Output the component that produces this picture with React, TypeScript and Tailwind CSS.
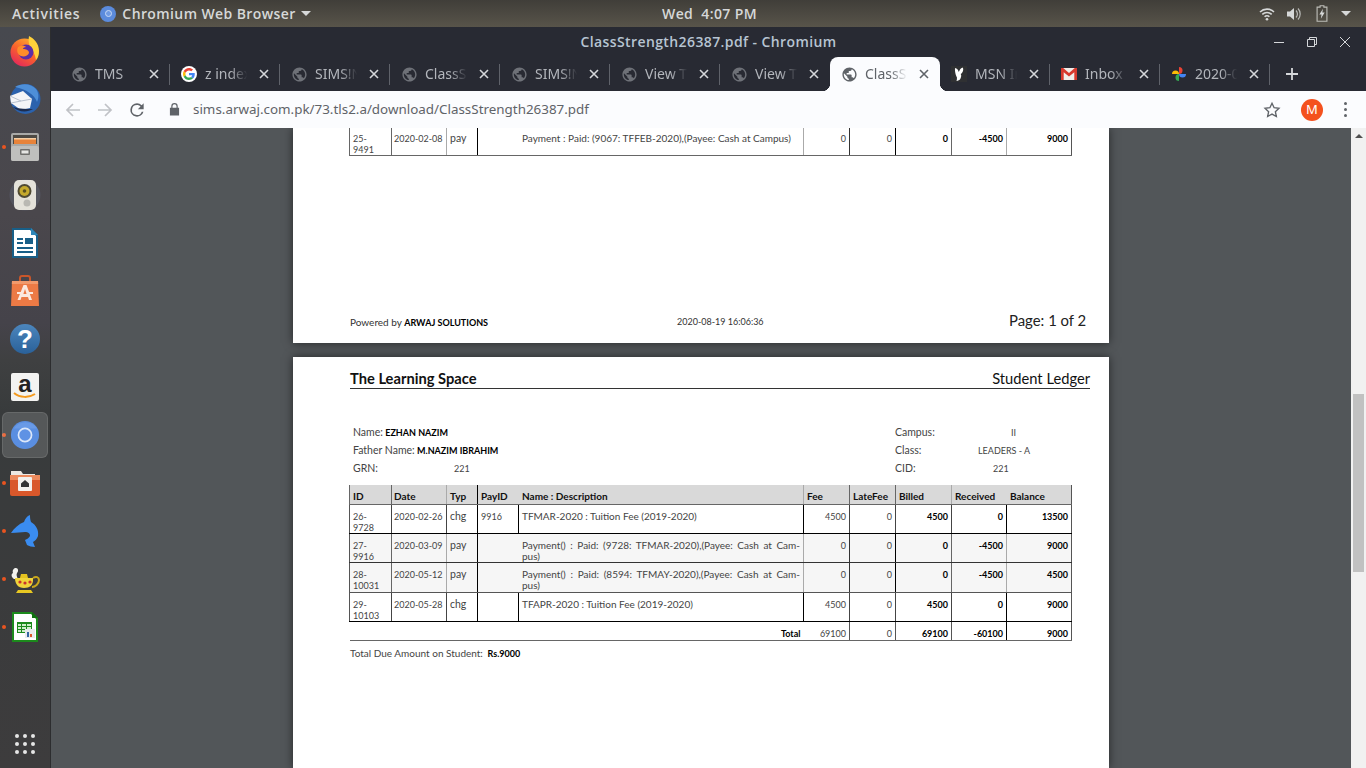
import { ReactNode } from 'react'

const globePath =
  'M12 2C6.48 2 2 6.48 2 12s4.48 10 10 10 10-4.48 10-10S17.52 2 12 2zm-1 17.93c-3.95-.49-7-3.85-7-7.93 0-.62.08-1.21.21-1.79L9 15v1c0 1.1.9 2 2 2v1.93zm6.9-2.54c-.26-.81-1-1.39-1.9-1.39h-1v-3c0-.55-.45-1-1-1H8v-2h2c.55 0 1-.45 1-1V7h2c1.1 0 2-.9 2-2v-.41c2.93 1.19 5 4.06 5 7.41 0 2.08-.8 3.97-2.1 5.39z'

function Globe({ active }: { active?: boolean }) {
  return (
    <svg viewBox="0 0 24 24" className="h-[17px] w-[17px]" fill={active ? '#5f6368' : '#6e7178'}>
      <path d={globePath} />
    </svg>
  )
}

function GoogleIcon() {
  return (
    <span className="flex h-4 w-4 items-center justify-center rounded-full bg-white">
      <svg viewBox="0 0 48 48" className="h-3 w-3">
        <path fill="#EA4335" d="M24 9.5c3.54 0 6.71 1.22 9.21 3.6l6.85-6.85C35.9 2.38 30.47 0 24 0 14.62 0 6.51 5.38 2.56 13.22l7.98 6.19C12.43 13.72 17.74 9.5 24 9.5z" />
        <path fill="#4285F4" d="M46.98 24.55c0-1.57-.15-3.09-.38-4.55H24v9.02h12.94c-.58 2.96-2.26 5.48-4.78 7.18l7.73 6c4.51-4.18 7.09-10.36 7.09-17.65z" />
        <path fill="#FBBC05" d="M10.53 28.59c-.5-1.45-.78-2.99-.78-4.59s.27-3.14.78-4.59l-7.98-6.19C.92 16.46 0 20.12 0 24c0 3.88.92 7.54 2.56 10.78l7.97-6.19z" />
        <path fill="#34A853" d="M24 48c6.48 0 11.93-2.13 15.89-5.81l-7.73-6c-2.15 1.45-4.92 2.3-8.16 2.3-6.26 0-11.57-4.22-13.47-9.91l-7.98 6.19C6.51 42.62 14.62 48 24 48z" />
      </svg>
    </span>
  )
}

function MsnIcon() {
  return (
    <svg viewBox="0 0 16 16" className="h-4 w-4">
      <rect width="16" height="16" fill="#2f3032" />
      <path fill="#fff" d="M4 2c2 .3 3.2 1.6 3.8 4C8.400 4.200 9.600 2.300 11.500 1.500c1 .6.900 2.700.2 4.200-.5 1.100-1.300 1.900-2 2.400.8 1 .7 2.900-.3 4.600-.8 1.300-2.200 2.100-3.900 2.300.4-1.300.6-2.500.4-3.800C4.800 9.700 3.700 5.500 4 2z" />
    </svg>
  )
}

function GmailIcon() {
  return (
    <svg viewBox="0 0 16 14" className="h-[14px] w-4">
      <rect y="1" width="16" height="12" fill="#f1eeea" />
      <path fill="#d8392d" d="M0 1h2.200L8 6l5.800-5H16v12h-2.700V5.200L8 9.600 2.700 5.200V13H0z" />
    </svg>
  )
}

function PhotosIcon() {
  return (
    <svg viewBox="0 0 16 16" className="h-4 w-4">
      <path fill="#ea4335" d="M8 8V1a3.500 3.500 0 0 1 0 7z" />
      <path fill="#4285f4" d="M8 8h7a3.500 3.500 0 0 1-7 0z" />
      <path fill="#34a853" d="M8 8v7a3.500 3.500 0 0 1 0-7z" />
      <path fill="#fbbc05" d="M8 8H1a3.500 3.500 0 0 1 7 0z" />
    </svg>
  )
}

const tabs: { title: string; icon: ReactNode; active?: boolean }[] = [
  { title: 'TMS', icon: <Globe /> },
  { title: 'z index - Google', icon: <GoogleIcon /> },
  { title: 'SIMS!NXT', icon: <Globe /> },
  { title: 'ClassStrength', icon: <Globe /> },
  { title: 'SIMS!NXT', icon: <Globe /> },
  { title: 'View Tuition', icon: <Globe /> },
  { title: 'View Tuition', icon: <Globe /> },
  { title: 'ClassStrength', icon: <Globe active />, active: true },
  { title: 'MSN Inbox', icon: <MsnIcon /> },
  { title: 'Inbox (12)', icon: <GmailIcon /> },
  { title: '2020-08-19', icon: <PhotosIcon /> },
]

function CloseX({ color }: { color: string }) {
  return (
    <svg viewBox="0 0 10 10" className="h-[10px] w-[10px]" stroke={color} strokeWidth="1.6" fill="none">
      <path d="M1 1l8 8M9 1l-8 8" />
    </svg>
  )
}

function Tab({ title, icon, active, hideSep }: { title: string; icon: ReactNode; active?: boolean; hideSep?: boolean }) {
  return (
    <div className={active ? 'relative flex h-[34px] w-[110px] items-center rounded-t-lg bg-[#fbfcfe] pl-[3px]' : 'relative flex h-[34px] w-[110px] items-center pl-[3px]'}>
      {active && <span className="absolute bottom-0 -left-2 h-2 w-2 bg-[radial-gradient(circle_at_0_0,#282a33_8px,#fbfcfe_8.500px)]" />}
      {active && <span className="absolute -right-2 bottom-0 h-2 w-2 bg-[radial-gradient(circle_at_100%_0,#282a33_8px,#fbfcfe_8.500px)]" />}
      <span className="flex w-[32px] shrink-0 items-center justify-center">{icon}</span>
      <span
        className={
          active
            ? 'mr-[4px] w-[46px] overflow-hidden whitespace-nowrap text-sm text-[#5f6368] [mask-image:linear-gradient(90deg,#000_55%,transparent_92%)]'
            : 'mr-[4px] w-[46px] overflow-hidden whitespace-nowrap text-sm text-[#b3b6bc] [mask-image:linear-gradient(90deg,#000_55%,transparent_92%)]'
        }
      >
        {title}
      </span>
      <span className="flex w-[18px] shrink-0 justify-center">
        <CloseX color={active ? '#5f6368' : '#d5d7da'} />
      </span>
      {!active && !hideSep && <span className="absolute top-[7px] right-0 h-[21px] w-px bg-[#5f626a]" />}
    </div>
  )
}

function TopBar() {
  return (
    <header className="flex h-[27px] shrink-0 items-center justify-between bg-[linear-gradient(180deg,#403e39,#58544a)] pr-[15px] pl-3 font-['Open_Sans',sans-serif] text-sm font-semibold tracking-[0.4px] text-[#d6d8d8]">
      <div className="flex w-[400px] items-center">
        <span className="tracking-[0.7px]">Activities</span>
        <span className="ml-[20px] flex h-4 w-4 items-center justify-center rounded-full bg-[#5b8bdc]">
          <span className="h-[7px] w-[7px] rounded-full border border-[#c8daf5] bg-[#6f9ae2]" />
        </span>
        <span className="ml-[6px]">Chromium Web Browser</span>
        <span className="ml-[5px] h-0 w-0 border-x-[5px] border-t-[5px] border-x-transparent border-t-[#d6d8d8]" />
      </div>
      <span className="absolute left-[662px]">Wed&nbsp; 4:07 PM</span>
      <div className="flex items-center gap-[12px]">
        <svg viewBox="0 0 16 14" className="-mr-px h-[14px] w-4" fill="none" stroke="#d6d8d8" strokeWidth="1.6">
          <path d="M1 5a10 10 0 0 1 14 0M3.300 7.400a6.800 6.800 0 0 1 9.400 0M5.600 9.800a3.400 3.400 0 0 1 4.800 0" />
          <circle cx="8" cy="12.200" r="1.300" fill="#d6d8d8" stroke="none" />
        </svg>
        <svg viewBox="0 0 16 14" className="h-[14px] w-4" fill="#d6d8d8">
          <path d="M1 4.500h3L8 1v12L4 9.500H1z" />
          <path d="M10 3.500a5 5 0 0 1 0 7M12 1.500a8 8 0 0 1 0 11" stroke="#b8b9b6" strokeWidth="1.200" fill="none" />
        </svg>
        <svg viewBox="0 0 12 18" className="ml-[2px] h-[17px] w-3">
          <path d="M4 .8h4v1.400h3.200v15H.8v-15H4z" fill="none" stroke="#bdbdb8" strokeWidth="1.200" />
          <path d="M7 4L3.200 10H5.500L4.800 14.500 8.800 8H6.400z" fill="#d6d8d8" />
        </svg>
        <span className="ml-[1px] h-0 w-0 border-x-[5px] border-t-[5px] border-x-transparent border-t-[#d6d8d8]" />
      </div>
    </header>
  )
}

function DockItem({ children, dot }: { children: ReactNode; dot?: boolean }) {
  return (
    <div className="relative flex h-12 w-full items-center justify-center">
      {dot && <span className="absolute top-[22px] left-[2px] h-[4px] w-[4px] rounded-full bg-[#e95420]" />}
      {children}
    </div>
  )
}

function Dock() {
  return (
    <aside className="flex w-[51px] shrink-0 flex-col border-r border-[#2c2d2f] bg-[linear-gradient(180deg,#47494f_0%,#4a474c_25%,#45434a_40%,#3f4041_45%,#383b3c_52%,#3a3b3c_75%,#3d3c3d_100%)]">
      <DockItem>
        <svg viewBox="0 0 32 32" className="h-8 w-8">
          <defs>
            <linearGradient id="fx" x1="0.800" y1="0" x2="0.200" y2="1">
              <stop offset="0" stopColor="#ffb02e" />
              <stop offset="0.500" stopColor="#f9622c" />
              <stop offset="1" stopColor="#e2245f" />
            </linearGradient>
          </defs>
          <circle cx="15.500" cy="17.500" r="14" fill="url(#fx)" />
          <path d="M20 1c4 2 10 7 10 15 0 4-1 7-3 9-1-6-3-10-6-12-1-4-2-8-1-12z" fill="#ffd23a" />
          <circle cx="17" cy="17" r="7.500" fill="#5b2ea6" />
          <path d="M9 12c3-2 6-2 8 0-2 0-3 1-3 2 3 0 6 1 6 4-1 3-5 4-8 3-3-1-5-5-3-9z" fill="#ff8c2a" />
        </svg>
      </DockItem>
      <DockItem>
        <svg viewBox="0 0 32 32" className="h-8 w-8">
          <circle cx="16.500" cy="16" r="15" fill="#2b62ad" />
          <path d="M6 4c6-4 16-4 21 2 3 4 3 9 1 13C26 12 17 6 6 4z" fill="#4e8fd8" />
          <path d="M1 13l13-5 9 8-2 9-9 2L2 20z" fill="#f4f5f7" />
          <path d="M1 13l11 5 11-2M2 20l10-2" fill="none" stroke="#b9c2cf" strokeWidth="1" />
          <path d="M4 24c5 5 14 6 20 2-6 0-14 0-20-2z" fill="#1c2d4f" />
        </svg>
      </DockItem>
      <DockItem dot>
        <svg viewBox="0 0 30 30" className="h-[30px] w-[30px]">
          <rect x="1" y="1" width="28" height="28" rx="2" fill="#a9a9a7" />
          <rect x="1" y="14" width="28" height="15" rx="2" fill="#bfbfbd" />
          <rect x="3" y="3" width="24" height="9" fill="#4d4943" />
          <rect x="4" y="6" width="22" height="6" fill="#e8833a" />
          <rect x="4" y="6" width="22" height="1.500" fill="#f6cfa4" />
          <rect x="10" y="17" width="10" height="6" rx="1" fill="#6f6f6d" />
          <rect x="11.500" y="18.500" width="7" height="3" fill="#e6e6e4" />
        </svg>
      </DockItem>
      <DockItem>
        <svg viewBox="0 0 32 32" className="h-8 w-8">
          <circle cx="16" cy="16" r="15.500" fill="#6d7690" opacity="0.280" />
          <rect x="5" y="1" width="22" height="30" rx="5" fill="#e4e2da" />
          <circle cx="15.500" cy="12" r="7" fill="#4f4a33" />
          <circle cx="15.500" cy="12" r="5" fill="#c4a92c" />
          <circle cx="15.500" cy="12" r="1.800" fill="#5a5020" />
          <circle cx="18" cy="24" r="3.500" fill="#b9b8b2" />
        </svg>
      </DockItem>
      <DockItem>
        <svg viewBox="0 0 28 32" className="h-8 w-7">
          <path d="M1 1h19l7 7v23H1z" fill="#185f88" />
          <path d="M3 3h16l6 6v20H3z" fill="#fff" />
          <path d="M20 1l7 7h-7z" fill="#2d86b8" />
          <path d="M6 11h6v2H6zM6 15h6v2H6zM6 20h16v2H6zM6 24h16v2H6z" fill="#185f88" />
          <rect x="14" y="11" width="8" height="6" fill="#185f88" />
        </svg>
      </DockItem>
      <DockItem>
        <svg viewBox="0 0 30 32" className="h-8 w-[30px]">
          <path d="M10 6V3a2 2 0 0 1 2-2h6a2 2 0 0 1 2 2v3" fill="none" stroke="#c9562a" strokeWidth="2" />
          <path d="M2 6h26l1 25H1z" fill="#ec7a45" />
          <path d="M2 6h26l.2 3H1.800z" fill="#f19a6c" />
          <path d="M13.500 10h3l5.500 15h-3l-1-3h-6.500l-1 3h-3z" fill="#fbe9df" />
          <rect x="7" y="17" width="16" height="2" fill="#fbe9df" />
          <path d="M15 14l-1.600 5h3.200z" fill="#ec7a45" />
        </svg>
      </DockItem>
      <DockItem>
        <span className="flex h-[30px] w-[30px] items-center justify-center rounded-full bg-[linear-gradient(180deg,#4c86bd,#2a6199)] font-['Liberation_Sans',sans-serif] text-[26px] leading-none font-bold text-white">
          ?
        </span>
      </DockItem>
      <DockItem>
        <span className="relative flex h-[28px] w-[28px] items-start justify-center rounded-[2px] bg-[#f3f3f1] font-['Liberation_Sans',sans-serif] text-[24px] leading-[22px] font-bold text-[#222]">
          a
          <svg viewBox="0 0 24 8" className="absolute bottom-[1px] left-[2px] h-[8px] w-6">
            <path d="M1 1c6 5 15 5 21 1" fill="none" stroke="#f39a1f" strokeWidth="2" />
          </svg>
        </span>
      </DockItem>
      <DockItem dot>
        <span className="absolute top-[1px] left-[2px] h-[46px] w-[46px] rounded-md border border-white/10 bg-white/15" />
        <svg viewBox="0 0 32 32" className="relative h-[30px] w-[30px]">
          <circle cx="16" cy="16" r="15" fill="#5a8ee0" />
          <path d="M16 9h13a15 15 0 0 0-25 0z" fill="#6f9fe8" opacity="0.700" />
          <circle cx="16" cy="16" r="7" fill="#5f92e4" stroke="#dbe7fa" strokeWidth="1.800" />
        </svg>
      </DockItem>
      <DockItem dot>
        <svg viewBox="0 0 30 26" className="h-[26px] w-[30px]">
          <path d="M1 1h10l2 3h12v6H1z" fill="#ece8e2" />
          <path d="M0 5h30v19a2 2 0 0 1-2 2H2a2 2 0 0 1-2-2z" fill="#d9582b" />
          <path d="M0 5h30v5H0z" fill="#ec8a5d" />
          <rect x="8" y="7" width="14" height="14" rx="1" fill="#f3f1ed" />
          <path d="M15 10l4 3.500v3.500h-8v-3.500z" fill="#333" />
        </svg>
      </DockItem>
      <DockItem dot>
        <svg viewBox="0 0 28 33" className="h-[33px] w-7">
          <path d="M0 18C3 13 8 9 13 7 14 4 16 1 19 0c0 2 0 4 1 7 5 3 8 8 7 14-1 3-3 5-5 6l2 5c-3 0-6-1-8-2l-2-5c2-1 4-2 5-4 0-3-2-4-5-4-4 0-8 1-14 1z" fill="#3a8cf0" />
        </svg>
      </DockItem>
      <DockItem dot>
        <svg viewBox="0 0 32 32" className="h-8 w-8">
          <path d="M5 16c-3-2-3-5-1-6-1-3 1-5 3-5 2 0 3 3 1 5-1 2 0 4 1 6z" fill="#f2f2ee" />
          <path d="M6 15h18v2c0 5-3 8-9 8s-9-4-9-10z" fill="#f0d43a" />
          <path d="M12 11h6l1 4H11z" fill="#e5c21f" />
          <path d="M24 15c3-2 6-1 6 2 0 4-4 7-7 7" fill="none" stroke="#c9a71c" strokeWidth="2" />
          <path d="M9 27h13l2 3H7z" fill="#e8c822" />
          <circle cx="11" cy="19" r="1.600" fill="#c8342c" />
          <circle cx="16" cy="20" r="1.600" fill="#c8342c" />
          <circle cx="21" cy="19" r="1.600" fill="#c8342c" />
        </svg>
      </DockItem>
      <DockItem dot>
        <svg viewBox="0 0 28 32" className="h-8 w-7">
          <path d="M1 1h20l6 6v24H1z" fill="#1c8a1c" />
          <path d="M3 3h17l5 5v21H3z" fill="#fff" />
          <path d="M21 1l6 6h-6z" fill="#0f6f0f" />
          <path d="M6 11h15v11H6z" fill="#1c8a1c" />
          <path d="M7 13h3v2H7zM11 13h4v2h-4zM16 13h4v2h-4zM7 16h3v2H7zM11 16h4v2h-4zM16 16h4v2h-4zM7 19h3v2H7zM11 19h4v2h-4z" fill="#cfeecb" />
          <rect x="14" y="18" width="10" height="9" fill="#e8ebee" />
          <path d="M16 21h2v5h-2z" fill="#3465a4" />
          <path d="M19 23h2v3h-2z" fill="#d9582b" />
        </svg>
      </DockItem>
      <div className="mt-auto flex h-12 w-full items-center justify-center">
        <div className="grid grid-cols-3 gap-[4px]">
          {Array.from({ length: 9 }).map((_, i) => (
            <span key={i} className="h-[4px] w-[4px] rounded-full bg-[#e6e6e6]" />
          ))}
        </div>
      </div>
    </aside>
  )
}

function Toolbar() {
  return (
    <div className="flex h-[37px] shrink-0 items-center bg-[#fbfcfe] pr-[14px] pl-3 shadow-[0_1px_0_#c6d0dc]">
      <svg viewBox="0 0 16 16" className="ml-[2px] h-4 w-4" fill="none" stroke="#c0c2c6" strokeWidth="1.700">
        <path d="M15 8H2M8 2L2 8l6 6" />
      </svg>
      <svg viewBox="0 0 16 16" className="ml-4 h-4 w-4" fill="none" stroke="#c0c2c6" strokeWidth="1.700">
        <path d="M1 8h13M8 2l6 6-6 6" />
      </svg>
      <svg viewBox="0 0 24 24" className="ml-[14px] h-[20px] w-[20px]" fill="#5f6368">
        <path d="M17.650 6.350A7.960 7.960 0 0 0 12 4a8 8 0 1 0 7.740 10h-2.080A6 6 0 1 1 12 6c1.660 0 3.140.69 4.220 1.780L13 11h7V4l-2.350 2.350z" />
      </svg>
      <svg viewBox="0 0 12 14" className="ml-[22px] h-[13px] w-[11px]" fill="#5f6368">
        <path d="M2.500 5V3.500a3.500 3.500 0 0 1 7 0V5H11v8.500H1V5zm1.300 0h4.400V3.500a2.200 2.200 0 0 0-4.400 0z" />
      </svg>
      <span className="ml-[13px] font-['Noto_Sans',sans-serif] text-[13.4px] whitespace-nowrap text-[#5f6368]">sims.arwaj.com.pk/73.tls2.a/download/ClassStrength26387.pdf</span>
      <svg viewBox="0 0 24 24" className="mr-[20px] ml-auto h-[18px] w-[18px]" fill="none" stroke="#5f6368" strokeWidth="1.800">
        <path d="M12 3l2.800 6 6.500.8-4.800 4.400 1.300 6.500L12 17.400 6.200 20.700l1.300-6.500L2.700 9.800 9.200 9z" />
      </svg>
      <span className="flex h-[22px] w-[22px] items-center justify-center rounded-full bg-[#f4511e] font-['Noto_Sans',sans-serif] text-[13px] text-white">M</span>
      <span className="ml-[21px] flex flex-col gap-[3px] pr-[5px]">
        <span className="h-[3px] w-[3px] rounded-full bg-[#5f6368]" />
        <span className="h-[3px] w-[3px] rounded-full bg-[#5f6368]" />
        <span className="h-[3px] w-[3px] rounded-full bg-[#5f6368]" />
      </span>
    </div>
  )
}

const headerBorders = ['border-r-[#666]', 'border-r-[#aaa]', 'border-r-black', 'border-r-transparent', 'border-r-[#aaa]', 'border-r-[#666]', 'border-r-[#666]', 'border-r-[#aaa]', 'border-r-transparent', 'border-r-[#555]']
const chgBorders = ['border-r-[#444]', 'border-r-[#444]', 'border-r-black', 'border-r-black', 'border-r-black', 'border-r-[#444]', 'border-r-[#444]', 'border-r-[#444]', 'border-r-black', 'border-r-[#555]']
const payBorders = ['border-r-[#666]', 'border-r-[#aaa]', 'border-r-black', 'border-r-transparent', 'border-r-[#aaa]', 'border-r-[#333]', 'border-r-black', 'border-r-[#666]', 'border-r-[#aaa]', 'border-r-[#555]']

const cell = 'border-r border-b px-[3px] pt-[6px] align-top leading-[11px] whitespace-nowrap'
const topCell = 'border-r border-b border-b-[#666] px-[3px] pt-[8px] align-top leading-[11px] whitespace-nowrap'

type Row = {
  kind: 'chg' | 'pay'
  id: [string, string]
  date: string
  payId?: string
  desc: [string, string?]
  fee: string
  late: string
  billed: string
  received: string
  balance: string
  line: string
  bg?: string
}

function LedgerRow({ row }: { row: Row }) {
  const b = row.kind === 'chg' ? chgBorders : payBorders
  const rowBg = row.bg ?? ''
  return (
    <tr className={rowBg}>
      <td className={`${cell} ${row.line} ${b[0]} border-l border-l-[#555]`}>
        {row.id[0]}
        <br />
        {row.id[1]}
      </td>
      <td className={`${cell} ${row.line} ${b[1]} pl-[2px]`}>{row.date}</td>
      <td className={`${cell} ${row.line} ${b[2]} text-[10.5px]`}>{row.kind}</td>
      <td className={`${cell} ${row.line} ${b[3]}`}>{row.payId}</td>
      <td className={`${cell} ${row.line} ${b[4]} text-[10px]`}>
        {row.desc[1] ? (
          <>
            <span className="block [text-align-last:justify]">{row.desc[0]}</span>
            <span className="block">{row.desc[1]}</span>
          </>
        ) : (
          row.desc[0]
        )}
      </td>
      <td className={`${cell} ${row.line} ${b[5]} text-right`}>{row.fee}</td>
      <td className={`${cell} ${row.line} ${b[6]} text-right`}>{row.late}</td>
      <td className={`${cell} ${row.line} ${b[7]} text-right font-bold text-black`}>{row.billed}</td>
      <td className={`${cell} ${row.line} ${b[8]} text-right font-bold text-black`}>{row.received}</td>
      <td className={`${cell} ${row.line} ${b[9]} text-right font-bold text-black`}>{row.balance}</td>
    </tr>
  )
}

function Cols() {
  return (
    <colgroup>
      <col className="w-[42px]" />
      <col className="w-[55px]" />
      <col className="w-[31px]" />
      <col className="w-[41px]" />
      <col className="w-[285px]" />
      <col className="w-[46px]" />
      <col className="w-[46px]" />
      <col className="w-[56px]" />
      <col className="w-[55px]" />
      <col className="w-[65px]" />
    </colgroup>
  )
}

const rows: Row[] = [
  { kind: 'chg', id: ['26-', '9728'], date: '2020-02-26', payId: '9916', desc: ['TFMAR-2020 : Tuition Fee (2019-2020)'], fee: '4500', late: '0', billed: '4500', received: '0', balance: '13500', line: 'border-b-black h-[29px]' },
  { kind: 'pay', id: ['27-', '9916'], date: '2020-03-09', desc: ['Payment() :  Paid:  (9728:  TFMAR-2020),(Payee:  Cash at Cam-', 'pus)'], fee: '0', late: '0', billed: '0', received: '-4500', balance: '9000', line: 'border-b-[#333] h-[29px]', bg: 'bg-[#f6f6f6]' },
  { kind: 'pay', id: ['28-', '10031'], date: '2020-05-12', desc: ['Payment() :  Paid:  (8594:  TFMAY-2020),(Payee:  Cash at Cam-', 'pus)'], fee: '0', late: '0', billed: '0', received: '-4500', balance: '4500', line: 'border-b-[#555] h-[30px]', bg: 'bg-[#f6f6f6]' },
  { kind: 'chg', id: ['29-', '10103'], date: '2020-05-28', desc: ['TFAPR-2020 : Tuition Fee (2019-2020)'], fee: '4500', late: '0', billed: '4500', received: '0', balance: '9000', line: 'border-b-black h-[29px]' },
]

function PageOne() {
  return (
    <section className="flex h-[215px] w-[816px] shrink-0 flex-col overflow-hidden bg-white pr-[19px] pl-[57px] shadow-[0_0_9px_rgba(0,0,0,0.55)]">
      <table className="-mt-[3px] -ml-px w-[723px] table-fixed border-collapse text-[9px] text-[#444]">
        <Cols />
        <tbody>
          <tr className="h-[30px]">
            <td className={`${topCell} border-r-[#666] border-l border-l-[#666]`}>
              25-
              <br />
              9491
            </td>
            <td className={`${topCell} border-r-[#aaa] pl-[2px]`}>2020-02-08</td>
            <td className={`${topCell} border-r-black text-[10.5px]`}>pay</td>
            <td className={`${topCell} border-r-transparent`} />
            <td className={`${topCell} border-r-[#aaa] text-[10px]`}>Payment : Paid: (9067: TFFEB-2020),(Payee: Cash at Campus)</td>
            <td className={`${topCell} border-r-[#333] text-right`}>0</td>
            <td className={`${topCell} border-r-black text-right`}>0</td>
            <td className={`${topCell} border-r-[#666] text-right font-bold text-black`}>0</td>
            <td className={`${topCell} border-r-[#aaa] text-right font-bold text-black`}>-4500</td>
            <td className={`${topCell} border-r-[#555] text-right font-bold text-black`}>9000</td>
          </tr>
        </tbody>
      </table>
      <div className="mt-auto flex h-[31px] items-start text-[9px] text-[#333]">
        <span className="w-[327px] pt-[3px]">
          <span className="text-[10px]">Powered by</span> <b className="text-black">ARWAJ SOLUTIONS</b>
        </span>
        <span className="w-[332px] pt-[3px]">2020-08-19 16:06:36</span>
        <span className="pt-px text-[14.9px] leading-[15px] text-[#222]">Page: 1 of 2</span>
      </div>
    </section>
  )
}

function PageTwo() {
  return (
    <section className="w-[816px] flex-1 bg-white pt-[14px] pr-[19px] pl-[57px] text-[9px] text-[#444] shadow-[0_0_9px_rgba(0,0,0,0.55)]">
      <div className="flex h-[18px] items-center justify-between border-b border-b-[#333] pb-[2px] text-[14.7px] text-[#111]">
        <span className="font-bold">The Learning Space</span>
        <span>Student Ledger</span>
      </div>
      <div className="mt-[35px] flex">
        <div className="flex w-[545px] flex-col pl-[3px]">
          <div className="flex h-[18px] items-center">
            <span className="text-[10.5px]">Name:</span>&nbsp;<b className="text-black">EZHAN NAZIM</b>
          </div>
          <div className="flex h-[18px] items-center">
            <span className="text-[10.5px]">Father Name:</span>&nbsp;<b className="text-black">M.NAZIM IBRAHIM</b>
          </div>
          <div className="flex h-[18px] items-center">
            <span className="w-[101px] text-[10.5px]">GRN:</span>221
          </div>
        </div>
        <div className="flex flex-col">
          <div className="flex h-[18px] items-center">
            <span className="w-[116px] text-[10.5px]">Campus:</span>II
          </div>
          <div className="flex h-[18px] items-center">
            <span className="w-[83px] text-[10.5px]">Class:</span>LEADERS - A
          </div>
          <div className="flex h-[18px] items-center">
            <span className="w-[98px] text-[10.5px]">CID:</span>221
          </div>
        </div>
      </div>
      <table className="mt-[7px] -ml-px w-[723px] table-fixed border-collapse">
        <Cols />
        <thead>
          <tr className="h-[19px] bg-[#d9d9d9] text-left text-[10px] font-bold text-[#111]">
            {['ID', 'Date', 'Typ', 'PayID', 'Name : Description', 'Fee', 'LateFee', 'Billed', 'Received', 'Balance'].map((h, i) => (
              <th key={h} className={`border-r border-b border-b-[#666] px-[3px] pt-[5px] align-middle leading-[11px] whitespace-nowrap ${headerBorders[i]} ${i === 0 ? 'border-l border-l-[#666]' : ''} ${i === 1 ? 'pl-[2px]' : ''}`}>
                {h}
              </th>
            ))}
          </tr>
        </thead>
        <tbody>
          {rows.map((r) => (
            <LedgerRow key={r.id[1]} row={r} />
          ))}
          <tr className="h-[19px]">
            <td colSpan={5} className="border-r-0 border-b border-b-[#666] px-[3px] pt-[5px] text-right leading-[11px] font-bold text-black">
              Total
            </td>
            <td className="border-r border-b border-r-[#555] border-b-[#666] px-[3px] pt-[5px] text-right leading-[11px]">69100</td>
            <td className="border-r border-b border-r-[#555] border-b-[#666] px-[3px] pt-[5px] text-right leading-[11px]">0</td>
            <td className="border-r border-b border-r-[#555] border-b-[#666] px-[3px] pt-[5px] text-right leading-[11px] font-bold text-black">69100</td>
            <td className="border-r border-b border-r-black border-b-[#666] px-[3px] pt-[5px] text-right leading-[11px] font-bold text-black">-60100</td>
            <td className="border-r border-b border-r-[#555] border-b-[#666] px-[3px] pt-[5px] text-right leading-[11px] font-bold text-black">9000</td>
          </tr>
        </tbody>
      </table>
      <p className="mt-[7px] leading-[11px]">
        <span className="text-[10px]">Total Due Amount on Student:</span>&nbsp; <b className="text-black">Rs.9000</b>
      </p>
    </section>
  )
}

export default function App() {
  return (
    <div className="relative flex h-[768px] w-[1366px] flex-col overflow-hidden font-['Noto_Sans',sans-serif]">
      <TopBar />
      <div className="flex min-h-0 flex-1">
        <Dock />
        <main className="flex min-w-0 flex-1 flex-col">
          <div className="relative flex h-[30px] shrink-0 items-center justify-center bg-[#282a33]">
            <span className="font-['Open_Sans',sans-serif] text-sm font-semibold tracking-[0.4px] text-[#b7c4d2]">ClassStrength26387.pdf - Chromium</span>
            <div className="absolute top-[9px] right-[15px] flex items-center gap-[21px]">
              <svg viewBox="0 0 12 12" className="h-3 w-3" stroke="#d5d7da" fill="none">
                <path d="M1 6.500h10" />
              </svg>
              <svg viewBox="0 0 12 12" className="h-3 w-3" stroke="#d5d7da" fill="none">
                <path d="M1.500 3.500h7v7h-7zM3.500 3.500v-2h7v7h-2" />
              </svg>
              <svg viewBox="0 0 12 12" className="h-3 w-3" stroke="#d5d7da" fill="none">
                <path d="M1 1l10 10M11 1L1 11" />
              </svg>
            </div>
          </div>
          <div className="flex h-[34px] shrink-0 items-center bg-[#282a33] pl-[9px]">
            {tabs.map((t, i) => (
              <Tab key={i} title={t.title} icon={t.icon} active={t.active} hideSep={i === 6} />
            ))}
            <svg viewBox="0 0 12 12" className="ml-4 h-3 w-3" stroke="#d5d7da" strokeWidth="1.800" fill="none">
              <path d="M6 0v12M0 6h12" />
            </svg>
          </div>
          <Toolbar />
          <div className="flex min-h-0 flex-1 bg-[#525659]">
            <div className="flex min-w-0 flex-1 flex-col items-center gap-[14px] overflow-hidden font-['Lato',sans-serif]">
              <PageOne />
              <PageTwo />
            </div>
            <div className="flex w-[15px] shrink-0 flex-col items-center bg-[#f1f1f1]">
              <span className="mt-[6px] h-0 w-0 border-x-[4px] border-b-[4px] border-x-transparent border-b-[#505050]" />
              <span className="mt-[256px] h-[178px] w-[11px] bg-[#c1c1c1]" />
            </div>
          </div>
        </main>
      </div>
    </div>
  )
}
